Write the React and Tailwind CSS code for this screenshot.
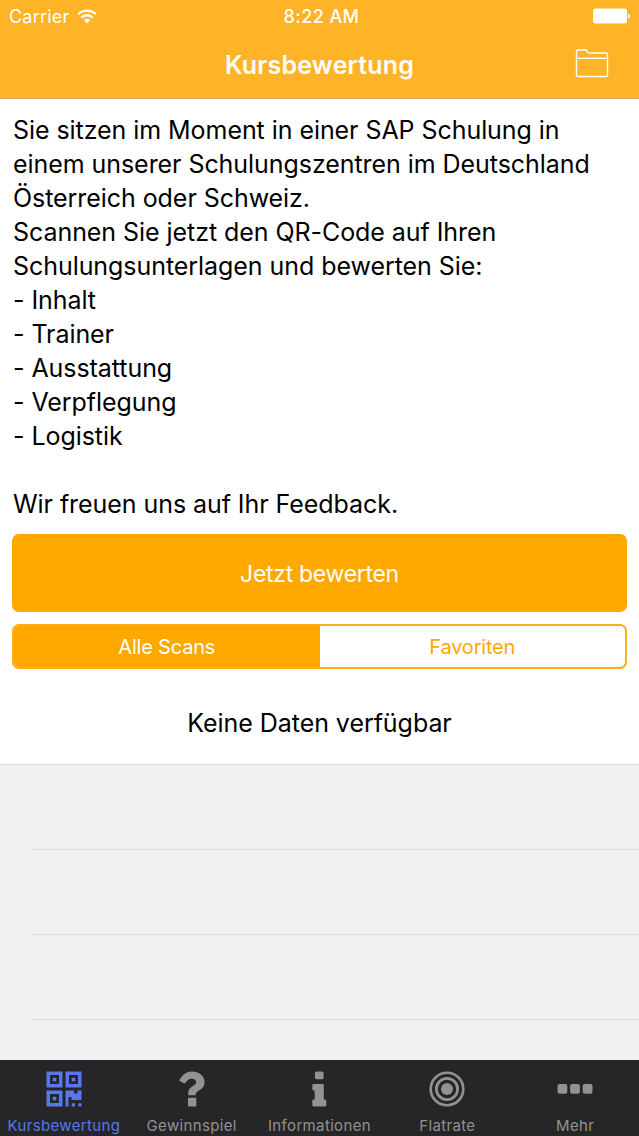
import { useState } from "react";

const intro = [
  "Sie sitzen im Moment in einer SAP Schulung in",
  "einem unserer Schulungszentren im Deutschland",
  "Österreich oder Schweiz.",
  "Scannen Sie jetzt den QR-Code auf Ihren",
  "Schulungsunterlagen und bewerten Sie:",
];

const topics = ["- Inhalt", "- Trainer", "- Ausstattung", "- Verpflegung", "- Logistik"];

const WifiIcon = () => (
  <svg width="20" height="15" viewBox="0 0 20 15" fill="none" stroke="white" strokeWidth="2.4">
    <path d="M1.2 5.2 A12.6 12.6 0 0 1 18.8 5.2" />
    <path d="M4.3 8.6 A8.1 8.1 0 0 1 15.7 8.6" />
    <path d="M10 14.4 L6.8 11.2 A4.5 4.5 0 0 1 13.2 11.2 Z" fill="white" stroke="none" />
  </svg>
);

const BatteryIcon = () => (
  <svg width="38" height="16" viewBox="0 0 38 16" fill="white">
    <rect x="1" y="0.5" width="34" height="15" rx="2.5" />
    <path d="M36 5.5 Q38 6 38 8 Q38 10 36 10.5 Z" />
  </svg>
);

const FolderIcon = () => (
  <svg width="34" height="30" viewBox="0 0 34 30" fill="none" stroke="white" strokeWidth="1.4" strokeLinejoin="round">
    <path d="M1.5 27 V2.5 Q1.5 1 3 1 H10.5 Q11.5 1 12 2 L13 4 H31 Q32.5 4 32.5 5.5 V26 Q32.5 27.5 31 27.5 H3 Q1.5 27.5 1.5 26" />
    <path d="M1.5 9.3 H32.5" />
  </svg>
);

const QrIcon = () => (
  <svg width="36" height="36" viewBox="0 0 36 36" fill="currentColor">
    <path fillRule="evenodd" d="M0.5 0.5 H16.5 V16.5 H0.5 Z M4 4 V13 H13 V4 Z" />
    <path d="M6.7 6.7 H10.3 V10.3 H6.7 Z" />
    <path fillRule="evenodd" d="M19.5 0.5 H35.5 V16.5 H19.5 Z M23 4 V13 H32 V4 Z" />
    <path d="M25.7 6.7 H29.3 V10.3 H25.7 Z" />
    <path fillRule="evenodd" d="M0.5 19.5 H16.5 V35.5 H0.5 Z M4 23 V32 H13 V23 Z" />
    <path d="M6.7 25.7 H10.3 V29.3 H6.7 Z" />
    <path d="M19.5 19.5 H28 V22.5 H31.5 V19.5 H35.5 V29 H25.5 V26 H22.5 V35.5 H19.5 Z" />
    <path d="M25.7 32.3 H29 V35.5 H25.7 Z M32.3 32.3 H35.5 V35.5 H32.3 Z" />
  </svg>
);

const QuestionIcon = () => (
  <svg width="36" height="36" viewBox="0 0 36 36" fill="currentColor">
    <path d="M5.3 9.3 C8.5 3.5 12.5 0.5 18 0.5 C25 0.5 30.5 5 30.5 11 C30.5 15.5 28.3 17.7 25 19.6 C22.6 21 21.8 22 21.8 23.2 V24.2 H14.2 V22.6 C14.2 18.5 16.4 16.6 19 15 C21 13.8 22.2 12.9 22.2 11.1 C22.2 9 20 7.8 17.6 7.8 C14.7 7.8 13.3 9.4 11.2 12 C10.9 12.4 10.3 12.5 9.9 12.2 L5.7 10 C5.2 9.8 5.1 9.6 5.3 9.3 Z" />
    <rect x="14" y="26.8" width="8.3" height="8.7" rx="0.8" />
  </svg>
);

const InfoIcon = () => (
  <svg width="36" height="36" viewBox="0 0 36 36" fill="currentColor">
    <rect x="14" y="0.5" width="8.6" height="7.7" rx="1.5" />
    <path d="M12.5 13 H21.5 Q22.8 13 22.8 14.3 V28.6 H24 Q25.3 28.6 25.3 30 V34 Q25.3 35.4 24 35.4 H12.5 Q11.3 35.4 11.3 34 V30 Q11.3 28.6 12.5 28.6 H13.7 V19.4 H12.5 Q11.3 19.4 11.3 18 V14.3 Q11.3 13 12.5 13 Z" />
  </svg>
);

const TargetIcon = () => (
  <svg width="36" height="36" viewBox="0 0 36 36" fill="none" stroke="currentColor">
    <circle cx="18" cy="18" r="16.3" strokeWidth="2.6" />
    <circle cx="18" cy="18" r="10.6" strokeWidth="2.8" />
    <circle cx="18" cy="18" r="6" fill="currentColor" stroke="none" />
  </svg>
);

const MoreIcon = () => (
  <svg width="36" height="36" viewBox="0 0 36 36" fill="currentColor">
    <rect x="0.5" y="13" width="9.8" height="9.8" rx="2" />
    <rect x="13.1" y="13" width="9.8" height="9.8" rx="2" />
    <rect x="25.7" y="13" width="9.8" height="9.8" rx="2" />
  </svg>
);

const tabs = [
  { label: "Kursbewertung", icon: QrIcon },
  { label: "Gewinnspiel", icon: QuestionIcon },
  { label: "Informationen", icon: InfoIcon },
  { label: "Flatrate", icon: TargetIcon },
  { label: "Mehr", icon: MoreIcon },
];

const Header = () => (
  <header className="h-[99px] shrink-0 border-b border-[#d9ad62] bg-[#ffb327] text-white">
    <div className="grid h-8 grid-cols-[1fr_auto_1fr] items-center pr-[9px] pl-[9px]">
      <div className="flex items-center gap-2">
        <span className="text-[18px] tracking-[0.2px]">Carrier</span>
        <WifiIcon />
      </div>
      <span className="pl-1 text-center text-[18px] font-medium tracking-[0.4px]">8:22 AM</span>
      <div className="flex justify-end">
        <BatteryIcon />
      </div>
    </div>
    <div className="grid h-[66px] grid-cols-[1fr_auto_1fr] items-center pr-[30px] pl-[30px]">
      <h1 className="col-start-2 pt-0.5 text-[25px] font-semibold tracking-[0.2px]">Kursbewertung</h1>
      <button className="-mt-0.5 justify-self-end">
        <FolderIcon />
      </button>
    </div>
  </header>
);

const App = () => {
  const [filter, setFilter] = useState("all");
  const [activeTab, setActiveTab] = useState("Kursbewertung");

  return (
    <div className="flex h-screen flex-col overflow-hidden bg-white font-['Inter',sans-serif] text-black">
      <Header />

      <section className="px-[13px] pt-3.5 pb-px text-[25px] leading-[34px] tracking-[-0.06px] whitespace-nowrap">
        {intro.map((line) => (
          <p key={line}>{line}</p>
        ))}
        <ul>
          {topics.map((topic) => (
            <li key={topic}>{topic}</li>
          ))}
        </ul>
        <p className="mt-[34px]">Wir freuen uns auf Ihr Feedback.</p>
      </section>

      <div className="mt-3 flex flex-col gap-3 px-3">
        <button className="h-[78px] rounded-[7px] bg-[#ffa800] pt-0.5 text-[23px] tracking-[-0.3px] text-white">
          Jetzt bewerten
        </button>
        <div className="grid h-[45px] grid-cols-2 overflow-hidden rounded-[7px] border-2 border-[#ffae14] text-[20px] tracking-[-0.2px]">
          <button
            className={filter === "all" ? "bg-[#ffa800] text-white" : "text-[#ffa800]"}
            onClick={() => setFilter("all")}
          >
            Alle Scans
          </button>
          <button
            className={filter === "favorites" ? "bg-[#ffa800] text-white" : "text-[#ffa800]"}
            onClick={() => setFilter("favorites")}
          >
            Favoriten
          </button>
        </div>
      </div>

      <p className="mt-3 flex h-[83px] shrink-0 items-center justify-center pt-0.5 text-[25px] tracking-[-0.05px]">
        Keine Daten verfügbar
      </p>

      <div className="flex-1 border-t border-[#d9d9db] bg-[#f1f0f2]">
        <div className="ml-[31px] h-[85px] border-b border-[#dbdadc]" />
        <div className="ml-[31px] h-[85px] border-b border-[#dbdadc]" />
        <div className="ml-[31px] h-[85px] border-b border-[#dbdadc]" />
      </div>

      <nav className="grid h-[76px] shrink-0 grid-cols-5 bg-[#262527]">
        {tabs.map(({ label, icon: Icon }) => (
          <button
            key={label}
            onClick={() => setActiveTab(label)}
            className={`flex flex-col items-center pt-[11px] ${activeTab === label ? "text-[#5677ee]" : "text-[#929292]"}`}
          >
            <Icon />
            <span className="mt-[9px] text-[15px] leading-5 tracking-[0.35px]">{label}</span>
          </button>
        ))}
      </nav>
    </div>
  );
};

export default App;
